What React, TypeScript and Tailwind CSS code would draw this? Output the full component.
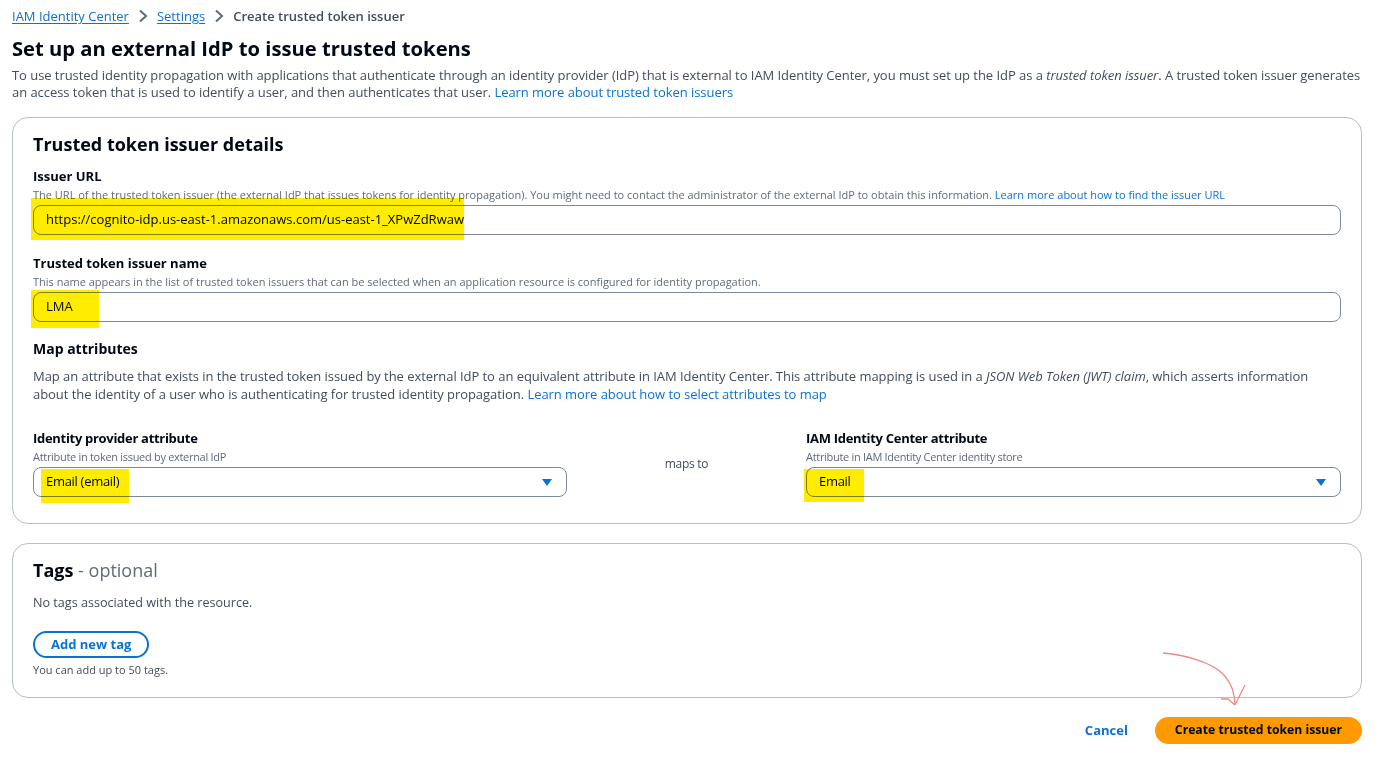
import React from 'react';

const Highlight: React.FC<{ className: string }> = ({ className }) => (
  <div className={`pointer-events-none absolute bg-[#ffec00] mix-blend-multiply ${className}`} />
);

const Caret: React.FC = () => (
  <svg width="12" height="9" viewBox="0 0 12 9" className="shrink-0">
    <path d="M1 1 L11 1 L6 8 Z" fill="#0972d3" />
  </svg>
);

const Field: React.FC<{ label: string; desc: React.ReactNode; children: React.ReactNode }> = ({ label, desc, children }) => (
  <div>
    <div className="text-[13px] font-bold leading-[20px] text-[#000716]">{label}</div>
    <div className="mt-[1px] mb-[2px] text-[11px] leading-[16px] text-[#5f6b7a]">{desc}</div>
    {children}
  </div>
);

export default function App() {
  return (
    <div className="relative w-[1387px] h-[758px] overflow-hidden bg-white text-[#000716]" style={{ fontFamily: '"Open Sans", "Noto Sans", sans-serif' }}>
      <div className="ml-3 w-[1350px] pt-[6px]">
        <nav className="flex items-center gap-[9px] text-[13px] leading-[20px]">
          <a className="text-[#0972d3] underline underline-offset-2">IAM Identity Center</a>
          <svg width="10" height="14" viewBox="0 0 10 14"><path d="M2 1.5 L8 7 L2 12.5" stroke="#5f6b7a" strokeWidth="2" fill="none" /></svg>
          <a className="text-[#0972d3] underline underline-offset-2">Settings</a>
          <svg width="10" height="14" viewBox="0 0 10 14"><path d="M2 1.5 L8 7 L2 12.5" stroke="#5f6b7a" strokeWidth="2" fill="none" /></svg>
          <span className="font-semibold text-[#414d5c]">Create trusted token issuer</span>
        </nav>

        <h1 className="mt-[9px] text-[20.2px] font-bold leading-[26px]">Set up an external IdP to issue trusted tokens</h1>
        <p className="mt-[6px] text-[13px] leading-[17px] text-[#414d5c] tracking-[-0.05px]">
          To use trusted identity propagation with applications that authenticate through an identity provider (IdP) that is external to IAM Identity Center, you must set up the IdP as a <i>trusted token issuer</i>. A trusted token issuer generates an access token that is used to identify a user, and then authenticates that user. <a className="text-[#0972d3]">Learn more about trusted token issuers</a>
        </p>

        <section className="mt-[16px] rounded-[16px] border border-[#b6bec9] px-5 pt-[14px] pb-[26px]">
          <h2 className="text-[18px] font-bold leading-[24px] mb-[10px]">Trusted token issuer details</h2>
          <div className="flex flex-col gap-[18px]">
            <div className="relative">
              <Field label="Issuer URL" desc={<>The URL of the trusted token issuer (the external IdP that issues tokens for identity propagation). You might need to contact the administrator of the external IdP to obtain this information. <a className="text-[#0972d3]">Learn more about how to find the issuer URL</a></>}>
                <div className="h-[30px] rounded-[8px] border border-[#7d8998] px-3 flex items-center text-[13px]">https://cognito-idp.us-east-1.amazonaws.com/us-east-1_XPwZdRwaw</div>
              </Field>
              <Highlight className="left-[-2px] top-[32px] w-[433px] h-[42px]" />
            </div>
            <div className="relative">
              <Field label="Trusted token issuer name" desc="This name appears in the list of trusted token issuers that can be selected when an application resource is configured for identity propagation.">
                <div className="h-[30px] rounded-[8px] border border-[#7d8998] px-3 flex items-center text-[13px]">LMA</div>
              </Field>
              <Highlight className="left-[-2px] top-[37px] w-[68px] h-[38px]" />
            </div>
          </div>

          <h3 className="mt-[17px] text-[14px] font-bold leading-[20px]">Map attributes</h3>
          <p className="mt-[8px] w-[1285px] text-[13px] leading-[18px] text-[#414d5c] tracking-[-0.05px]">
            Map an attribute that exists in the trusted token issued by the external IdP to an equivalent attribute in IAM Identity Center. This attribute mapping is used in a <i>JSON Web Token (JWT) claim</i>, which asserts information about the identity of a user who is authenticating for trusted identity propagation. <a className="text-[#0972d3]">Learn more about how to select attributes to map</a>
          </p>

          <div className="mt-[25px] grid grid-cols-[534px_1fr_535px] tracking-[-0.3px]">
            <div className="relative">
              <Field label="Identity provider attribute" desc="Attribute in token issued by external IdP">
                <div className="h-[30px] rounded-[8px] border border-[#7d8998] pl-3 pr-[13px] flex items-center justify-between text-[13px]">
                  <span>Email (email)</span>
                  <Caret />
                </div>
              </Field>
              <Highlight className="left-[8px] top-[41px] w-[88px] h-[34px]" />
            </div>
            <div className="pt-[28px] text-center text-[12px] leading-[16px] text-[#414d5c]">maps to</div>
            <div className="relative">
              <Field label="IAM Identity Center attribute" desc="Attribute in IAM Identity Center identity store">
                <div className="h-[30px] rounded-[8px] border border-[#7d8998] pl-3 pr-[13px] flex items-center justify-between text-[13px]">
                  <span>Email</span>
                  <Caret />
                </div>
              </Field>
              <Highlight className="left-[-2px] top-[41px] w-[60px] h-[33px]" />
            </div>
          </div>
        </section>

        <section className="mt-[19px] rounded-[16px] border border-[#b6bec9] px-5 pt-[14px] pb-[20px]">
          <h2 className="text-[18px] leading-[24px]"><span className="font-bold">Tags</span><span className="text-[#5f6b7a]"> - optional</span></h2>
          <p className="mt-[13px] text-[12.6px] leading-[16px] text-[#414d5c]">No tags associated with the resource.</p>
          <button className="mt-[20px] h-[27px] px-[16px] rounded-full border-2 border-[#0972d3] text-[13px] font-bold text-[#0972d3] leading-none">Add new tag</button>
          <p className="mt-[5px] text-[11px] leading-[14px] text-[#414d5c]">You can add up to 50 tags.</p>
        </section>

        <div className="mt-[19px] flex justify-end items-center gap-[27px]">
          <button className="text-[13px] font-bold text-[#0972d3]">Cancel</button>
          <button className="h-[27px] px-[20px] rounded-full bg-[#ff9900] text-[12.2px] font-bold text-[#000716]">Create trusted token issuer</button>
        </div>
      </div>

      <svg className="pointer-events-none absolute left-0 top-0" width="1387" height="758">
        <path d="M1163 653 C1185 655 1212 662 1224 675 C1232 684 1235 694 1235 705" stroke="#ec8a8a" strokeWidth="1.3" fill="none" />
        <path d="M1245 685 L1235 705 M1221 699 L1228 699 L1235 705" stroke="#ec8a8a" strokeWidth="1.3" fill="none" />
      </svg>
    </div>
  );
}
